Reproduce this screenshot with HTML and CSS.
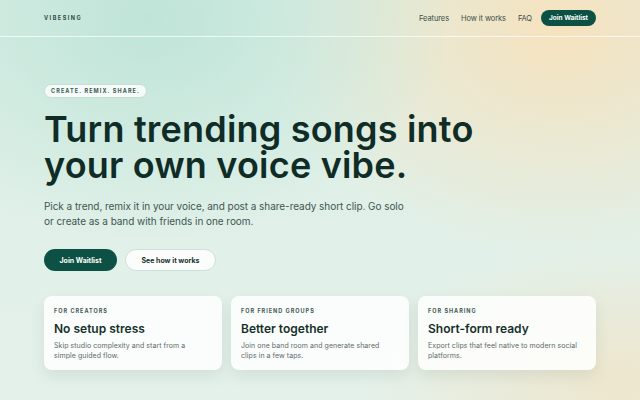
FILE: index.html
```html
<!DOCTYPE html>
<html lang="en">
<head>
<meta charset="utf-8">
<title>Vibesing</title>
<link rel="stylesheet" href="styles.css">
</head>
<body>
<div class="page">
  <header class="topbar">
    <div class="wrap topbar-inner">
      <div class="brand">VIBESING</div>
      <nav class="nav">
        <a href="#">Features</a>
        <a href="#">How it works</a>
        <a href="#">FAQ</a>
        <a href="#" class="btn-nav">Join Waitlist</a>
      </nav>
    </div>
  </header>
  <main class="wrap hero">
    <div class="badge">CREATE. REMIX. SHARE.</div>
    <h1 class="title"><span class="line">Turn trending songs into</span><span class="line">your own voice vibe.</span></h1>
    <p class="lead">Pick a trend, remix it in your voice, and post a share-ready short clip. Go solo<br>or create as a band with friends in one room.</p>
    <div class="actions">
      <a href="#" class="btn btn-primary">Join Waitlist</a>
      <a href="#" class="btn btn-ghost">See how it works</a>
    </div>
    <section class="cards">
      <article class="card">
        <div class="card-label">FOR CREATORS</div>
        <h2 class="card-title">No setup stress</h2>
        <p class="card-text">Skip studio complexity and start from a<br>simple guided flow.</p>
      </article>
      <article class="card">
        <div class="card-label">FOR FRIEND GROUPS</div>
        <h2 class="card-title">Better together</h2>
        <p class="card-text">Join one band room and generate shared<br>clips in a few taps.</p>
      </article>
      <article class="card">
        <div class="card-label">FOR SHARING</div>
        <h2 class="card-title">Short-form ready</h2>
        <p class="card-text">Export clips that feel native to modern social<br>platforms.</p>
      </article>
    </section>
  </main>
</div>
</body>
</html>
```
FILE: styles.css
```css
* { box-sizing: border-box; }
html, body { margin: 0; padding: 0; }
body {
  font-family: "Inter", "DejaVu Sans", sans-serif;
  color: #13302a;
  width: 640px;
  height: 400px;
  overflow: hidden;
}
.page {
  width: 640px;
  height: 400px;
  background:
    radial-gradient(ellipse 300px 220px at 150px 20px, rgba(190,228,215,0.95), rgba(190,228,215,0) 100%),
    radial-gradient(ellipse 300px 230px at 560px 30px, rgba(246,226,190,1), rgba(246,226,190,0) 100%),
    radial-gradient(ellipse 260px 140px at 620px 380px, rgba(238,230,205,1), rgba(238,230,205,0) 100%),
    linear-gradient(180deg, #dcefe7 0%, #e4f1ea 100%);
}
a { text-decoration: none; color: inherit; }
.wrap { width: 552px; margin: 0 auto; }
.topbar {
  height: 37px;
  border-bottom: 1px solid rgba(255,255,255,0.7);
}
.topbar-inner {
  height: 36px;
  display: flex;
  align-items: center;
  justify-content: space-between;
}
.brand {
  font-size: 5.5px;
  font-weight: 700;
  letter-spacing: 1.5px;
  color: #2d4d45;
}
.nav {
  display: flex;
  align-items: center;
  gap: 12px;
  font-size: 7.5px;
  letter-spacing: -0.1px;
  color: #3a4d48;
}
.btn-nav {
  background: #0c5143;
  color: #fff;
  font-weight: 700;
  font-size: 6.5px;
  letter-spacing: 0;
  height: 16px;
  padding: 0 8px;
  border-radius: 8px;
  display: flex;
  align-items: center;
  margin-left: -3px;
}
.hero { padding-top: 47px; }
.badge {
  width: fit-content;
  height: 14px;
  line-height: 12px;
  padding: 0 6px;
  border: 1px solid #c9dcd5;
  border-radius: 7px;
  background: rgba(255,255,255,0.8);
  font-size: 5.5px;
  font-weight: 700;
  letter-spacing: 1.1px;
  color: #3b5a52;
}
.title {
  margin: 13px 0 0;
  font-size: 36px;
  line-height: 36px;
  font-weight: 600;
  letter-spacing: 0.2px;
  color: #102c26;
}
.title .line { display: block; height: 36px; }
.lead {
  margin: 16px 0 0;
  font-size: 10px;
  line-height: 15px;
  letter-spacing: -0.05px;
  color: #3e5651;
}
.actions {
  display: flex;
  gap: 8px;
  margin-top: 20px;
}
.btn {
  height: 22px;
  border-radius: 11px;
  display: flex;
  align-items: center;
  font-size: 7px;
  font-weight: 700;
}
.btn-primary {
  background: #0c5143;
  color: #fff;
  padding: 0 15.5px;
}
.btn-ghost {
  background: rgba(255,255,255,0.85);
  border: 1px solid #cfdfd9;
  color: #1c2f2a;
  padding: 0 15.5px;
}
.cards {
  display: grid;
  grid-template-columns: repeat(3, 1fr);
  gap: 9px;
  margin-top: 25px;
}
.card {
  height: 74px;
  background: rgba(255,255,255,0.85);
  border-radius: 8px;
  padding: 12px 8px 0 10px;
  box-shadow: 0 6px 14px rgba(80,110,100,0.12);
}
.card-label {
  font-size: 5.5px;
  font-weight: 700;
  letter-spacing: 1px;
  color: #3e5a53;
}
.card-title {
  margin: 8px 0 0;
  font-size: 12px;
  line-height: 14px;
  font-weight: 600;
  color: #14302a;
}
.card-text {
  margin: 5px 0 0;
  font-size: 7px;
  line-height: 10px;
  letter-spacing: 0.05px;
  color: #5a6b67;
}
```
